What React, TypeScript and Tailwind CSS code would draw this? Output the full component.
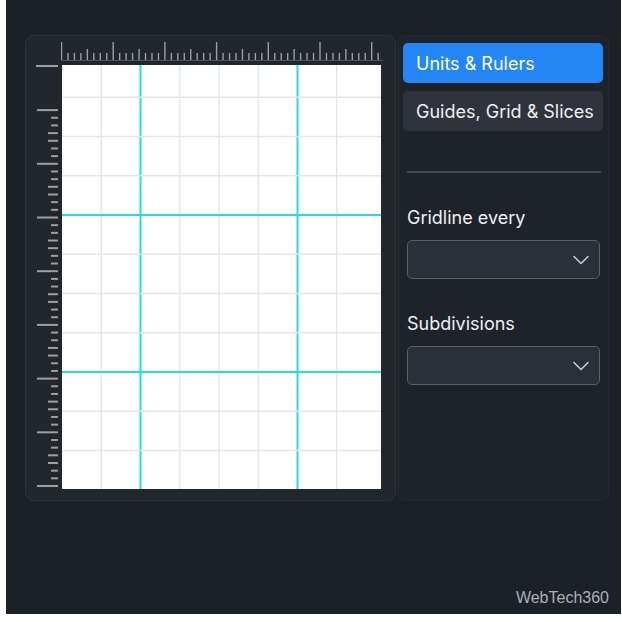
import { ChevronDown } from 'lucide-react';

const FONT = { fontFamily: 'Inter, "Noto Sans", sans-serif' };

// top ruler: major every ~51.7px, 8 minor steps between
function TopRuler() {
  const step = 51.7 / 8;
  const ticks = [];
  for (let i = 0; i * step <= 322; i++) {
    const x = 0.5 + i * step;
    const h = i % 8 === 0 ? 18 : i % 4 === 0 ? 11 : 7;
    ticks.push(<line key={i} x1={x} x2={x} y1={24 - h} y2={24} stroke="#9aa0a8" strokeWidth={1.4} />);
  }
  return (
    <svg width={322} height={29} className="block">
      {ticks}
      <line x1={0} x2={322} y1={24.5} y2={24.5} stroke="#4b5159" strokeWidth={1} />
    </svg>
  );
}

// left ruler, ticks hang off the right edge
function LeftRuler() {
  const step = 53.7 / 7;
  const start = 485 - 64 - 53.7 * 7;
  const ticks = [];
  for (let i = 0; start + i * step <= 424; i++) {
    const y = start + i * step;
    if (y < 6) continue;
    const len = i % 7 === 0 ? 21 : i % 7 === 3 || i % 7 === 4 ? 10 : 7;
    ticks.push(<line key={i} x1={32 - len} x2={32} y1={y} y2={y} stroke="#9aa0a8" strokeWidth={2} />);
  }
  return (
    <svg width={36} height={424} className="block">
      <line x1={10} x2={32} y1={1} y2={1} stroke="#9aa0a8" strokeWidth={2} />
      {ticks}
    </svg>
  );
}

function GridCanvas() {
  const W = 319;
  const H = 424;
  const s = 39.25;
  const cols = [1, 2, 3, 4, 5, 6, 7].map(k => k * s);
  const rows: number[] = [];
  for (let y = 150 - 3 * s; y < H; y += s) rows.push(y);
  return (
    <svg width={W} height={H} className="block bg-white">
      {cols.map((x, i) => (
        <line key={'c' + i} x1={x} x2={x} y1={0} y2={H}
          stroke={i === 1 || i === 5 ? '#22dbe6' : '#e3e5e8'} strokeWidth={i === 1 || i === 5 ? 2 : 1.4} />
      ))}
      {rows.map((y, i) => (
        <line key={'r' + i} x1={0} x2={W} y1={y} y2={y}
          stroke={i === 3 || i === 7 ? '#22dbe6' : '#e3e5e8'} strokeWidth={i === 3 || i === 7 ? 2 : 1.4} />
      ))}
    </svg>
  );
}

function Select() {
  return (
    <div className="h-[39px] rounded-[5px] border border-[#5a6068] bg-[#2b3038] flex items-center justify-end pr-[4px]">
      <ChevronDown className="w-[28px] h-[28px] text-[#c9cdd3]" strokeWidth={1.3} />
    </div>
  );
}

export default function App() {
  return (
    <div className="w-[622px] h-[622px] bg-white" style={FONT}>
      <div className="relative ml-[6px] w-[615px] h-[614px] bg-[#1c2027]">
        <div className="flex gap-[2px] pt-[35px] pl-[19px]">
          {/* canvas with rulers */}
          <div className="w-[371px] h-[466px] rounded-lg border border-[#2e333b] bg-[#22262d]">
            <div className="flex pl-[35px]">
              <TopRuler />
            </div>
            <div className="flex">
              <LeftRuler />
              <GridCanvas />
            </div>
          </div>

          {/* settings panel */}
          <div className="w-[211px] h-[466px] rounded-lg border border-[#262a32] bg-[#1e2229] pt-[7px] pl-[4px] pr-[5px]">
            <div className="flex flex-col gap-[8px]">
              <div className="h-[40px] rounded-[5px] bg-[#2386f4] flex items-center pl-[13px] text-[18px] text-white">
                Units &amp; Rulers
              </div>
              <div className="h-[40px] rounded-[5px] bg-[#2f343c] flex items-center pl-[13px] text-[18px] text-[#eef0f3]">
                Guides, Grid &amp; Slices
              </div>
            </div>
            <div className="ml-[4px] mr-[2px] mt-[40px] border-t-2 border-[#454a52]" />
            <div className="ml-[4px] mr-[3px]">
              <div className="mt-[32px] text-[18px] text-[#eef0f3] leading-[26px]">Gridline every</div>
              <div className="mt-[9px]"><Select /></div>
              <div className="mt-[32px] text-[18px] text-[#eef0f3] leading-[26px]">Subdivisions</div>
              <div className="mt-[9px]"><Select /></div>
            </div>
          </div>
        </div>

        <div className="absolute right-[12px] bottom-[4px] text-[16px] text-[#aab0b6]"
          style={{ fontFamily: '"Liberation Sans", Arial, sans-serif' }}>
          WebTech360
        </div>
      </div>
    </div>
  );
}
